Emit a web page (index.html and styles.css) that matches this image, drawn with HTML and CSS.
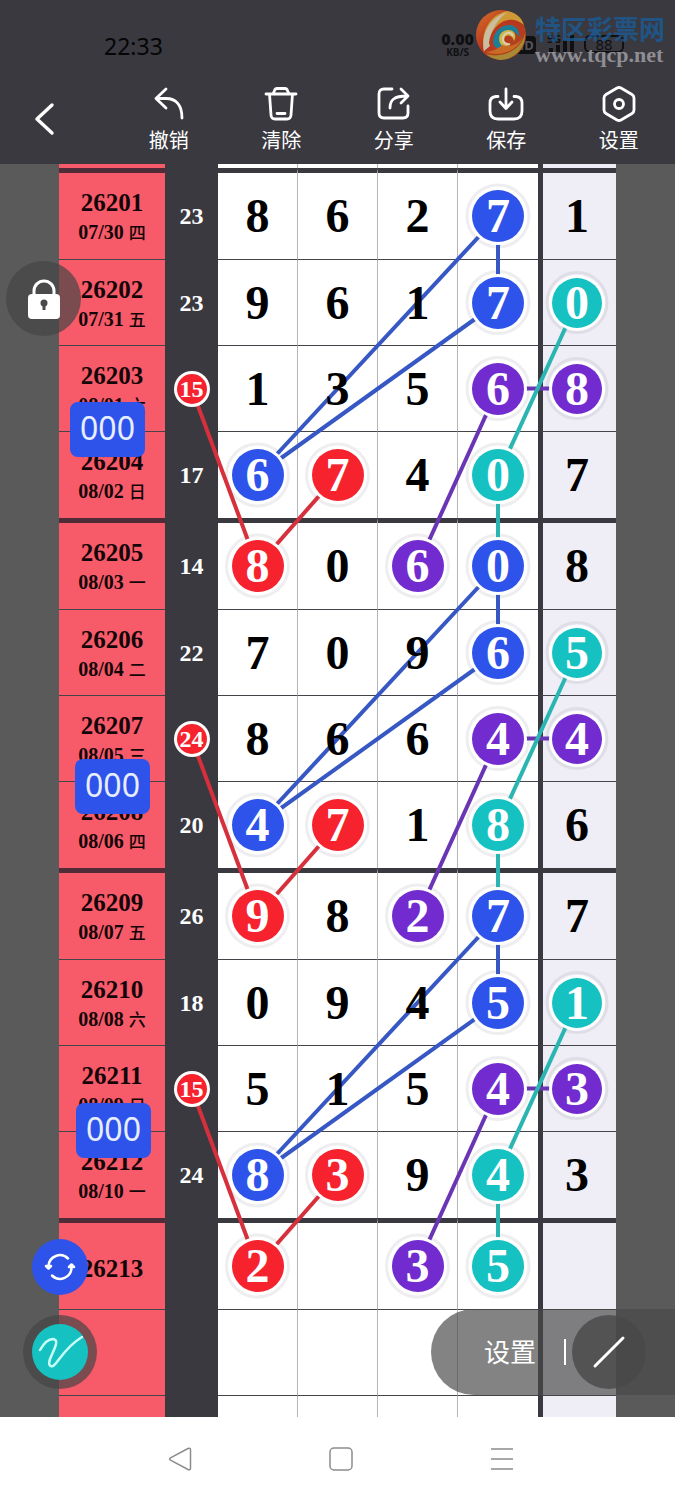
FILE: index.html
```html
<!DOCTYPE html>
<html lang="zh-CN">
<head>
    <meta charset="UTF-8">
    <meta name="viewport" content="width=device-width, initial-scale=1">
    <title>走势图</title>
    <link rel="stylesheet" href="styles.css">
</head>
<body>
<header class="top">
    <!-- 状态栏 -->
    <div class="status">
        <span class="time">22:33</span>
        <div class="status-right">
            <div class="speed"><b>0.00</b><span>KB/S</span></div>
            <svg class="wifi" width="28" height="20" viewBox="0 0 28 20" fill="none" stroke="#101013" stroke-width="3">
                <path d="M2 7 Q14 -3 26 7M6 12 Q14 5 22 12M10 16 Q14 12 18 16"/>
            </svg>
            <span class="hd">HD</span>
            <div class="signal">
                <span>5G</span>
                <svg width="28" height="20" viewBox="0 0 28 20" fill="#101013">
                    <path d="M2 15h4v4h-4zM9 12h4v7h-4zM16 7h4v12h-4zM23 2h4v17h-4z"/>
                </svg>
            </div>
            <span class="battery">88</span>
        </div>
        <!-- 水印 -->
        <div class="mark">
            <svg width="52" height="52" viewBox="0 0 52 52">
                <defs>
                    <linearGradient id="ball" x1="0" y1="0" x2="1" y2="1">
                        <stop offset="0" stop-color="#d9752c"/>
                        <stop offset="0.45" stop-color="#b8341f"/>
                        <stop offset="1" stop-color="#a8521f"/>
                    </linearGradient>
                </defs>
                <circle cx="26" cy="26" r="25" fill="url(#ball)"/>
                <path d="M9 43C5 24 14 6 32 2C41 3 47 9 49 16C40 8 28 9 20 19C13 28 12 37 9 43Z" fill="#cf9a35"/>
                <path d="M9 42C6 24 15 9 32 3C20 13 14 25 15 37Z" fill="#c9bda2"/>
                <path d="M14 34C15 22 24 13 37 13C46 15 49 22 48 29C43 20 34 17 28 21C20 26 19 33 22 42C17 41 15 38 14 34Z" fill="#b8391f"/>
                <path d="M18 32C19 22 26 16 35 16C42 17 45 22 44 28C40 21 33 20 29 24C24 29 26 37 33 40C25 43 18 39 18 32Z" fill="#1c7f97"/>
                <path d="M25 34C22 27 27 21 33 21C40 21 42 27 39 32C38 27 33 25 30 28C28 32 30 35 34 36C31 38 27 38 25 34Z" fill="#cdb64a"/>
                <path d="M10 43C24 48 42 43 48 28C44 35 36 39 27 36C23 40 16 43 10 43Z" fill="#c96a25"/>
                <path d="M11 45C28 50 46 41 50 25C51 40 38 51 25 51C19 50 14 48 11 45Z" fill="#a88a34"/>
                <path d="M38 27C36 22 29 23 28 29C27 33 31 36 35 35" fill="none" stroke="#ddd0a8" stroke-width="2"/>
            </svg>
            <div class="mark-text"><b>特区彩票网</b><span>www.tqcp.net</span></div>
        </div>
    </div>
    <!-- 工具栏 -->
    <nav class="tools">
        <button class="back" aria-label="返回">
            <svg width="24" height="34" viewBox="0 0 24 34"><path d="M19 3L4 17L19 31" stroke-width="3.4"/></svg>
        </button>
        <button>
            <svg width="36" height="36" viewBox="0 0 36 36"><path d="M15 3L5 12.500L15 22M5 12.500H15C25 12.500 31 19 31 32"/></svg>
            撤销
        </button>
        <button>
            <svg width="36" height="36" viewBox="0 0 36 36"><path d="M3 8H33M6.500 8L8 29Q8.300 33 12 33H24Q27.700 33 28 29L29.500 8M10 8L11.500 4.500Q12.200 2.500 14 2.500H22Q23.800 2.500 24.500 4.500L26 8M14 27.500H22"/></svg>
            清除
        </button>
        <button>
            <svg width="36" height="36" viewBox="0 0 36 36"><path d="M16 3H8Q3 3 3 8V27Q3 32 8 32H27Q32 32 32 27V20M14 22C14 14 18 10 31 10M25 3L32 10L25 17"/></svg>
            分享
        </button>
        <button>
            <svg width="36" height="36" viewBox="0 0 36 36"><path d="M10 10.500H8Q2 11 2 17V25Q2 33 10 33H26Q34 33 34 25V17Q34 11 28 10.500H26M18 3V22M12 16L18 22.500L24 16"/></svg>
            保存
        </button>
        <button>
            <svg width="36" height="36" viewBox="0 0 36 36"><path d="M16 2Q18 1 20 2L31 8.500Q33 9.700 33 12V24Q33 26.300 31 27.500L20 34Q18 35 16 34L5 27.500Q3 26.300 3 24V12Q3 9.700 5 8.500Z"/><circle cx="18" cy="18" r="4.500"/></svg>
            设置
        </button>
    </nav>
</header>

<main class="stage" id="stage">
    <svg class="links" id="links"></svg>
    <table class="chart" id="chart">
        <colgroup>
            <col class="c-issue"><col class="c-sum"><col><col><col><col><col class="c-last">
        </colgroup>
        <tbody>
        <tr class="cut"><th></th><td></td><td></td><td></td><td></td><td></td><td></td></tr>
        <tr class="first">
            <th>26201<small>07/30 <em>四</em></small></th><td><i>23</i></td>
            <td><i>8</i></td><td><i>6</i></td><td><i>2</i></td><td><i class="blue">7</i></td><td><i>1</i></td>
        </tr>
        <tr>
            <th>26202<small>07/31 <em>五</em></small></th><td><i>23</i></td>
            <td><i>9</i></td><td><i>6</i></td><td><i>1</i></td><td><i class="blue">7</i></td><td><i class="teal">0</i></td>
        </tr>
        <tr>
            <th>26203<small>08/01 <em>六</em></small></th><td><i class="red">15</i></td>
            <td><i>1</i></td><td><i>3</i></td><td><i>5</i></td><td><i class="purple">6</i></td><td><i class="purple">8</i></td>
        </tr>
        <tr class="last">
            <th>26204<small>08/02 <em>日</em></small></th><td><i>17</i></td>
            <td><i class="blue">6</i></td><td><i class="red">7</i></td><td><i>4</i></td><td><i class="teal">0</i></td><td><i>7</i></td>
        </tr>
        <tr class="first">
            <th>26205<small>08/03 <em>一</em></small></th><td><i>14</i></td>
            <td><i class="red">8</i></td><td><i>0</i></td><td><i class="purple">6</i></td><td><i class="blue">0</i></td><td><i>8</i></td>
        </tr>
        <tr>
            <th>26206<small>08/04 <em>二</em></small></th><td><i>22</i></td>
            <td><i>7</i></td><td><i>0</i></td><td><i>9</i></td><td><i class="blue">6</i></td><td><i class="teal">5</i></td>
        </tr>
        <tr>
            <th>26207<small>08/05 <em>三</em></small></th><td><i class="red">24</i></td>
            <td><i>8</i></td><td><i>6</i></td><td><i>6</i></td><td><i class="purple">4</i></td><td><i class="purple">4</i></td>
        </tr>
        <tr class="last">
            <th>26208<small>08/06 <em>四</em></small></th><td><i>20</i></td>
            <td><i class="blue">4</i></td><td><i class="red">7</i></td><td><i>1</i></td><td><i class="teal">8</i></td><td><i>6</i></td>
        </tr>
        <tr class="first">
            <th>26209<small>08/07 <em>五</em></small></th><td><i>26</i></td>
            <td><i class="red">9</i></td><td><i>8</i></td><td><i class="purple">2</i></td><td><i class="blue">7</i></td><td><i>7</i></td>
        </tr>
        <tr>
            <th>26210<small>08/08 <em>六</em></small></th><td><i>18</i></td>
            <td><i>0</i></td><td><i>9</i></td><td><i>4</i></td><td><i class="blue">5</i></td><td><i class="teal">1</i></td>
        </tr>
        <tr>
            <th>26211<small>08/09 <em>日</em></small></th><td><i class="red">15</i></td>
            <td><i>5</i></td><td><i>1</i></td><td><i>5</i></td><td><i class="purple">4</i></td><td><i class="purple">3</i></td>
        </tr>
        <tr class="last">
            <th>26212<small>08/10 <em>一</em></small></th><td><i>24</i></td>
            <td><i class="blue">8</i></td><td><i class="red">3</i></td><td><i>9</i></td><td><i class="teal">4</i></td><td><i>3</i></td>
        </tr>
        <tr class="first">
            <th>26213</th><td></td>
            <td><i class="red">2</i></td><td></td><td><i class="purple">3</i></td><td><i class="teal">5</i></td><td></td>
        </tr>
        <tr><th></th><td></td><td></td><td></td><td></td><td></td><td></td></tr>
        <tr class="rest"><th></th><td></td><td></td><td></td><td></td><td></td><td></td></tr>
        </tbody>
    </table>

    <!-- 悬浮标签和按钮 -->
    <span class="tag tag1">000</span>
    <span class="tag tag2">000</span>
    <span class="tag tag3">000</span>
    <button class="lock" aria-label="锁定">
        <svg width="34" height="42" viewBox="0 0 34 42">
            <path d="M7 17V13a10 10 0 0 1 20 0V17" fill="none" stroke="#fff" stroke-width="3"/>
            <rect x="1" y="16" width="32" height="25" rx="4" fill="#fff"/>
            <circle cx="17" cy="25" r="3.500" fill="#4a4a4a"/>
            <path d="M17 25V32" stroke="#4a4a4a" stroke-width="3"/>
        </svg>
    </button>
    <button class="refresh" aria-label="刷新">
        <svg width="32" height="30" viewBox="0 0 32 30" fill="none" stroke="#fff" stroke-width="2.500" stroke-linecap="round" stroke-linejoin="round">
            <path d="M4.500 14A11.500 11.500 0 0 1 24 6.500M27.500 15A11.500 11.500 0 0 1 8 23.500"/>
            <path d="M2 14H7L4.500 16.500ZM25 15H30L27.500 12.500Z" fill="#fff"/>
        </svg>
    </button>
    <button class="pen" aria-label="画笔">
        <svg width="56" height="56" viewBox="0 0 56 56" fill="none" stroke="#c9fff8" stroke-width="2.500" stroke-linecap="round">
            <path d="M8 26C12 19 17 15 21 15C28 16 22 25 18 35C16 41 18 43 21 42C26 39 32 24 50 13"/>
        </svg>
    </button>
    <div class="pill">
        <button class="pill-set">设置</button>
        <button class="pill-line" aria-label="直线">
            <svg width="34" height="34" viewBox="0 0 34 34"><path d="M3 31L31 3" stroke="#fff" stroke-width="3" stroke-linecap="round"/></svg>
        </button>
    </div>
</main>

<footer class="keys">
    <button aria-label="后退"><svg width="24" height="24" viewBox="0 0 24 24"><path d="M20 1.500Q22.500 .5 22.500 3V21Q22.500 23.500 20 22.500L2.500 13.200Q.8 12 2.500 10.800Z"/></svg></button>
    <button aria-label="主页"><svg width="24" height="24" viewBox="0 0 24 24"><rect x="1" y="1" width="22" height="22" rx="4"/></svg></button>
    <button aria-label="菜单"><svg width="24" height="24" viewBox="0 0 24 24"><path d="M1 2H23M1 12H23M1 22H23"/></svg></button>
</footer>
<script src="script.js"></script>
</body>
</html>
```
FILE: styles.css
```css
*{
    margin: 0;
    padding: 0;
    box-sizing: border-box;
}
body{
    min-height: 100vh;
    display: flex;
    flex-direction: column;
    background: #fff;
    font-family: "Noto Sans", "Noto Sans CJK SC", sans-serif;
}
button{
    border: 0;
    background: none;
    color: #fff;
    font-family: inherit;
    cursor: pointer;
}
svg{
    display: block;
}
/* 顶部 */
.top{
    height: 164px;
    background: #3a3940;
}
.status{
    position: relative;
    height: 76px;
    padding: 32px 51px 0 104px;
    display: flex;
    justify-content: space-between;
    color: #101013;
}
.time{
    font-size: 23px;
    line-height: 28px;
    color: #050506;
}
.status-right{
    display: flex;
    align-items: flex-start;
    gap: 5px;
}
.speed{
    display: flex;
    flex-direction: column;
    align-items: center;
    font: bold 10px/10px "Noto Sans", sans-serif;
}
.speed b{
    font-size: 16px;
    line-height: 15px;
}
.wifi{
    margin-top: 3px;
}
.hd{
    width: 24px;
    height: 18px;
    margin-top: 4px;
    border-radius: 4px;
    background: #101013;
    color: #55545b;
    font-size: 13px;
    font-weight: bold;
    line-height: 18px;
    text-align: center;
}
.signal{
    position: relative;
    margin: 1px 4px 0 6px;
}
.signal span{
    position: absolute;
    left: 0;
    top: 0;
    font: bold 11px/12px "Noto Sans", sans-serif;
}
.battery{
    width: 40px;
    height: 18px;
    margin-top: 3px;
    border: 2px solid #101013;
    border-radius: 6px;
    font-size: 15px;
    line-height: 14px;
    text-align: center;
}
.mark{
    position: absolute;
    right: 8px;
    top: 9px;
    display: flex;
    gap: 8px;
}
.mark-text{
    width: 132px;
    padding-top: 4px;
    display: flex;
    flex-direction: column;
}
.mark-text b{
    font-size: 26px;
    line-height: 32px;
    color: rgba(24,92,152,.8);
    white-space: nowrap;
}
.mark-text span{
    font: bold 22px/20px "Liberation Serif", serif;
    color: #8f8e93;
}
.tools{
    display: grid;
    grid-template-columns: repeat(6, 1fr);
    height: 88px;
}
.tools button{
    display: flex;
    flex-direction: column;
    align-items: center;
    gap: 9px;
    padding-top: 10px;
    font-size: 20px;
    line-height: 20px;
}
.tools svg{
    fill: none;
    stroke: #fff;
    stroke-width: 2.8;
    stroke-linecap: round;
    stroke-linejoin: round;
}
.tools .back{
    align-items: flex-start;
    padding: 26px 0 0 33px;
}
/* 走势图 */
.stage{
    position: relative;
    padding: 0 59px;
    background: #5a5a5a;
    overflow: hidden;
}
.links{
    position: absolute;
    left: 0;
    top: 0;
    width: 100%;
    height: 100%;
    z-index: 1;
}
.links circle{
    fill: none;
    stroke: rgba(70,70,90,.09);
    stroke-width: 3;
}
.links line{
    stroke-width: 4;
}
.links .blue{ stroke: #3657c4; }
.links .red{ stroke: #d5303b; }
.links .purple{ stroke: #6a35b5; }
.links .teal{ stroke: #2bb5b2; }
.chart{
    width: 100%;
    table-layout: fixed;
    border-collapse: separate;
    border-spacing: 0;
    font-family: "Liberation Serif", "Noto Sans CJK SC", serif;
    font-weight: bold;
}
.c-issue{ width: 106px; }
.c-sum{ width: 53px; }
.c-last{ width: 78px; }
.chart th, .chart td{
    height: 86px;
    border-bottom: 1px solid #45444a;
    text-align: center;
    vertical-align: middle;
    background: #fff;
}
.chart .cut th, .chart .cut td{
    height: 4px;
    border-bottom: 0;
}
.chart .first th, .chart .first td{
    height: 92px;
    border-top: 5px solid #3a3940;
}
.chart .last th, .chart .last td{
    border-bottom: 0;
}
.chart .rest th, .chart .rest td{
    height: 21px;
    border-bottom: 0;
}
.chart th{
    background: #f75a69;
    color: #140608;
    font-size: 25px;
    line-height: 28px;
}
.chart tr:not(.cut):not(.rest) th{
    padding-top: 6px;
}
.chart .first th{
    border-top-color: #4f2c37;
}
.chart small{
    display: block;
    font-size: 20px;
    line-height: 30px;
}
.chart em{
    font-size: 17px;
    font-style: normal;
    font-weight: 500;
}
.chart td{
    border-right: 1px solid #b5b5b8;
    font-size: 48px;
    line-height: 52px;
    color: #000;
}
.chart td:nth-child(2){
    border-right: 0;
    border-bottom-color: #3a3940;
    background: #3a3940;
    color: #fff;
    font-size: 24px;
    line-height: 30px;
}
.chart td:nth-child(6){
    border-right: 0;
}
.chart td:nth-child(7){
    padding-right: 5px;
    border-left: 5px solid #3a3940;
    border-right: 0;
    background: #efeef6;
}
.chart i{
    position: relative;
    z-index: 2;
    display: block;
    width: 52px;
    height: 52px;
    margin: 0 auto;
    border-radius: 50%;
    font-style: normal;
}
.chart td:nth-child(2) i{
    width: 30px;
    height: 30px;
}
.chart td:nth-child(7) i{
    width: 50px;
    height: 50px;
    line-height: 50px;
}
.chart i[class]{
    color: #fff;
    box-shadow: 0 0 0 3px #fff;
}
.chart i.blue{ background: #2d53ea; }
.chart i.red{ background: #f6222e; }
.chart i.purple{ background: #722bcf; }
.chart i.teal{ background: #16c1c2; }
/* 悬浮层 */
.tag, .lock, .refresh, .pen, .pill{
    position: absolute;
    z-index: 3;
}
.tag{
    width: 75px;
    height: 55px;
    border-radius: 8px;
    background: #2d53ea;
    color: #e6eeff;
    font-size: 32px;
    line-height: 52px;
    text-align: center;
}
.tag1{ left: 70px; top: 238px; }
.tag2{ left: 75px; top: 595px; }
.tag3{ left: 76px; top: 939px; }
.lock, .refresh, .pen{
    display: flex;
    align-items: center;
    justify-content: center;
    border-radius: 50%;
}
.lock{
    left: 6px;
    top: 97px;
    width: 75px;
    height: 75px;
    background: rgba(68,68,68,.7);
}
.refresh{
    left: 32px;
    top: 1075px;
    width: 56px;
    height: 56px;
    background: #2d53ea;
}
.pen{
    left: 23px;
    top: 1151px;
    width: 74px;
    height: 74px;
    background: rgba(68,68,68,.7);
}
.pen svg{
    border-radius: 50%;
    background: #16c1c2;
}
.pill{
    right: 0;
    top: 1145px;
    width: 244px;
    height: 86px;
    padding-right: 29px;
    display: flex;
    align-items: center;
    justify-content: flex-end;
    border-radius: 43px 0 0 43px;
    background: rgba(72,72,72,.68);
}
.pill-set{
    padding-right: 28px;
    margin-right: 6px;
    border-right: 2px solid #fff;
    font-size: 26px;
    line-height: 26px;
}
.pill-line{
    width: 74px;
    height: 74px;
    display: flex;
    align-items: center;
    justify-content: center;
    border-radius: 50%;
    background: rgba(72,72,72,.8);
}
/* 底部按键 */
.keys{
    flex: 1;
    min-height: 83px;
    padding-left: 6px;
    display: flex;
    align-items: center;
    justify-content: center;
    gap: 137px;
    background: #fff;
}
.keys svg{
    fill: none;
    stroke: #8c8c8c;
    stroke-width: 1.5;
}
```
FILE: script.js
```js
// 连线：起点行、起点列、终点行、终点列、颜色（列 1 是和值，2~6 是号码）
var pattern = [
    [0, 5, 1, 5, 'blue'],
    [0, 5, 3, 2, 'blue'],
    [1, 5, 3, 2, 'blue'],
    [2, 1, 4, 2, 'red'],
    [3, 3, 4, 2, 'red'],
    [2, 5, 2, 6, 'purple'],
    [2, 5, 4, 4, 'purple'],
    [1, 6, 3, 5, 'teal'],
    [3, 5, 4, 5, 'teal']
]
var stage = document.getElementById('stage')
var links = document.getElementById('links')
var rows = document.getElementById('chart').rows

function add(name, attrs){
    var el = document.createElementNS('http://www.w3.org/2000/svg', name)
    for(var key in attrs){
        el.setAttribute(key, attrs[key])
    }
    links.appendChild(el)
}
// 取圆球中心点
function center(ball){
    var box = ball.getBoundingClientRect()
    var base = stage.getBoundingClientRect()
    return {
        x: box.left + box.width / 2 - base.left,
        y: box.top + box.height / 2 - base.top,
        r: box.width / 2
    }
}
function draw(){
    links.innerHTML = ''
    // 外圈
    var balls = document.querySelectorAll('.chart i[class]')
    for(var i = 0; i < balls.length; i++){
        var c = center(balls[i])
        if(c.r > 20){
            add('circle', {cx: c.x, cy: c.y, r: c.r + 5})
        }
    }
    // 每四行重复一组
    for(var g = 0; g < 3; g++){
        pattern.forEach(function (p) {
            var a = center(rows[g * 4 + p[0] + 1].cells[p[1]].firstChild)
            var b = center(rows[g * 4 + p[2] + 1].cells[p[3]].firstChild)
            add('line', {x1: a.x, y1: a.y, x2: b.x, y2: b.y, 'class': p[4]})
        })
    }
}
draw()
window.onresize = draw
```
